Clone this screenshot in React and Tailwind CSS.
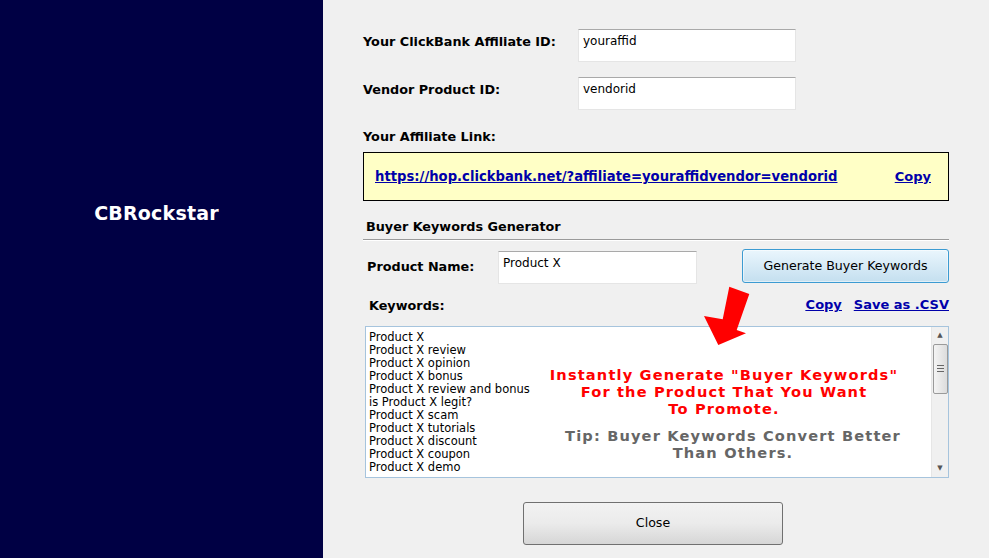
import React from "react";

const keywords = [
  "Product X",
  "Product X review",
  "Product X opinion",
  "Product X bonus",
  "Product X review and bonus",
  "is Product X legit?",
  "Product X scam",
  "Product X tutorials",
  "Product X discount",
  "Product X coupon",
  "Product X demo",
];

const ui = { fontFamily: '"DejaVu Sans", Verdana, sans-serif' };

function Field(props) {
  return (
    <div className={"h-[33px] bg-white border border-[#e5e5e5] border-t-[#a9a9a9] pl-[4px] pt-[2px] text-[12px] text-black " + props.className}>
      {props.value}
    </div>
  );
}

function Scrollbar() {
  return (
    <div className="w-[17px] h-full bg-[#f0f0f0] border-l border-[#e6e6e6] flex flex-col items-center">
      <div className="h-[17px] flex items-center justify-center text-[7px] text-[#555]">▲</div>
      <div className="w-[15px] h-[50px] rounded-[2px] border border-[#9a9a9a] bg-gradient-to-r from-[#f4f4f4] to-[#dcdcdc] flex flex-col items-center justify-center gap-[2px]">
        <div className="w-[7px] h-px bg-[#666]"></div>
        <div className="w-[7px] h-px bg-[#666]"></div>
        <div className="w-[7px] h-px bg-[#666]"></div>
      </div>
      <div className="flex-1"></div>
      <div className="h-[17px] flex items-center justify-center text-[7px] text-[#555]">▼</div>
    </div>
  );
}

export default function App() {
  return (
    <div className="w-[989px] h-[558px] flex overflow-hidden" style={ui}>
      <div className="w-[323px] h-full bg-[#000044] flex justify-center pt-[201px]">
        <div className="text-white font-bold text-[19px] h-[24px] leading-[24px] -ml-[10px] tracking-[0.2px]">CBRockstar</div>
      </div>

      <div className="relative flex-1 h-full bg-[#f0f0f0] pl-[40px] pr-[40px] pt-[29px] text-[13px] text-black">
        <div className="flex items-start">
          <div className="w-[215px] font-bold pt-[3px] text-[12.8px]">Your ClickBank Affiliate ID:</div>
          <Field className="w-[218px]" value="youraffid" />
        </div>
        <div className="flex items-start mt-[15px]">
          <div className="w-[215px] font-bold pt-[3px] text-[12.8px]">Vendor Product ID:</div>
          <Field className="w-[218px]" value="vendorid" />
        </div>

        <div className="font-bold mt-[17px] text-[12.8px]">Your Affiliate Link:</div>
        <div className="mt-[6px] h-[49px] border border-black bg-[#ffffc6] flex items-center justify-between pl-[11px] pr-[17px]">
          <a className="font-bold text-[#0000aa] underline text-[13.2px]">https://hop.clickbank.net/?affiliate=youraffidvendor=vendorid</a>
          <a className="font-bold text-[#0000aa] underline">Copy</a>
        </div>

        <div className="font-bold mt-[16px] pl-[3px] text-[12.8px]">Buyer Keywords Generator</div>
        <div className="mt-[3px] h-[2px] border-t border-[#9a9a9a] border-b border-b-white"></div>

        <div className="flex items-start mt-[8px]">
          <div className="w-[135px] pl-[4px] font-bold pt-[8px] text-[12.8px]">Product Name:</div>
          <Field className="w-[199px] mt-[2px]" value="Product X" />
          <div className="flex-1"></div>
          <button className="w-[207px] h-[34px] rounded-[3px] border border-[#3c9bd2] bg-gradient-to-b from-[#eaf6fd] to-[#c4dfef] text-[12.6px] text-black shadow-[inset_0_0_0_1px_#ffffff80]">
            Generate Buyer Keywords
          </button>
        </div>

        <div className="flex items-end justify-between mt-[11px]">
          <div className="font-bold pl-[6px] text-[12.8px]">Keywords:</div>
          <div className="flex gap-[12px] font-bold text-[#0000aa] underline">
            <a>Copy</a>
            <a>Save as .CSV</a>
          </div>
        </div>

        <div className="relative mt-[11px] ml-[2px] h-[152px] bg-white border border-[#a6c4dd] flex">
          <div className="flex-1 pl-[3px] pt-[4px] text-[11.5px] leading-[13px]">
            {keywords.map((k) => (
              <div key={k}>{k}</div>
            ))}
          </div>
          <Scrollbar />
          <div className="absolute left-[158px] top-[39px] w-[400px] text-center font-bold tracking-[1.15px]">
            <div className="text-[#ff0000] text-[14.6px] leading-[17px]">
              Instantly Generate "Buyer Keywords"<br />
              For the Product That You Want<br />
              To Promote.
            </div>
            <div className="text-[#666666] text-[14.6px] leading-[17px] mt-[10px] pl-[18px]">
              Tip: Buyer Keywords Convert Better<br />
              Than Others.
            </div>
          </div>
        </div>

        <div className="flex mt-[24px] pl-[160px]">
          <button className="w-[260px] h-[43px] rounded-[3px] border border-[#707070] bg-gradient-to-b from-[#f2f2f2] via-[#ebebeb] to-[#d6d6d6] text-[12.6px] text-black">
            Close
          </button>
        </div>

        <svg className="absolute left-0 top-0 pointer-events-none" width="666" height="558">
          <polygon
            points="406.3,286.7 426.3,294 413.7,330 423,333.3 395.3,345 381,316 399.7,319.3"
            fill="#ff0000"
          />
        </svg>
      </div>
    </div>
  );
}
